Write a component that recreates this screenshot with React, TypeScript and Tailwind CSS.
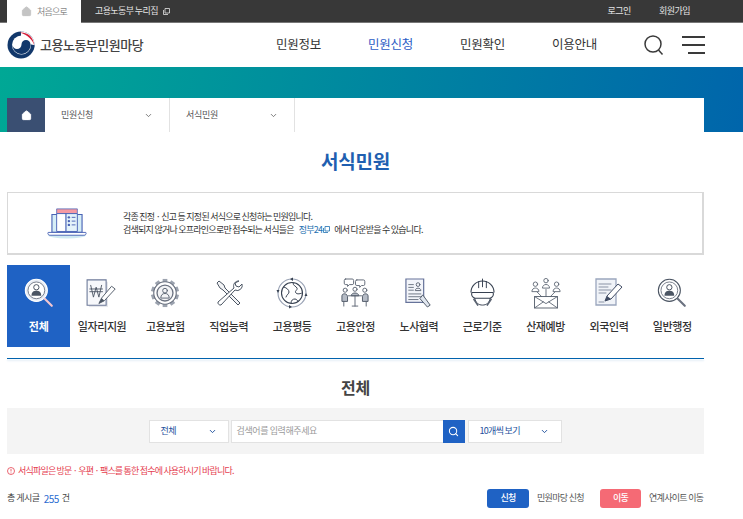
import React from "react";
import { Home, ChevronDown, Search } from "lucide-react";

const S = "#5b6472";
const common = { fill: "none", stroke: S, strokeWidth: 1, strokeLinecap: "round" as const, strokeLinejoin: "round" as const };

function Magnifier({ light }: { light?: boolean }) {
  const c = light ? "#ffffff" : "#4b5563";
  return (
    <svg width="30" height="30" viewBox="0 0 34 34">
      <circle cx="14" cy="14" r="12.500" fill={light ? "#e8edf5" : "#fff"} stroke={c} strokeWidth="1.2" />
      <circle cx="14" cy="14" r="9.500" fill="#fff" stroke="#6b7280" strokeWidth="1" />
      <circle cx="14" cy="10.500" r="3" fill="none" stroke="#374151" />
      <path d="M8.500 20c0-4 2.500-5.500 5.500-5.500s5.500 1.500 5.500 5.500z" fill="#4b5563" />
      <path d="M23.500 23.500l8 8" stroke={light ? "#f3c6d0" : "#6b7280"} strokeWidth="2.400" strokeLinecap="round" />
    </svg>
  );
}
function Won() {
  return (
    <svg width="33" height="29" viewBox="0 0 36 32">
      <path d="M3 3h21v28H3z" fill="#e5e7eb" />
      <path d="M1 1h21v28H1z" fill="#f7f8fb" stroke="#6d7a99" strokeWidth="1.200" />
      <path d="M5 7l3 13 3-11 3 11 3-13M4 11h14M4 14h14" {...common} stroke="#4b5563" />
      <path d="M14 27l3-6 11-13 4 3-12 13z" fill="#fff" stroke="#4b5563" />
      <path d="M14 27l3-6 3 3z" fill="#4b5563" />
    </svg>
  );
}
function Gear() {
  const teeth = Array.from({ length: 10 }, (_, i) => i * 36);
  return (
    <svg width="30" height="30" viewBox="0 0 32 32">
      {teeth.map((a) => (
        <rect key={a} x="13.500" y="1" width="5" height="5" fill="#9ca3af" transform={`rotate(${a} 16 16)`} />
      ))}
      <circle cx="16" cy="16" r="12" fill="#fff" stroke="#6b7280" strokeWidth="1.200" />
      <circle cx="16" cy="16" r="8.500" fill="#f3f4f6" stroke="#6b7280" strokeWidth="1.400" />
      <circle cx="16" cy="13.500" r="2.500" {...common} />
      <path d="M11.500 21c0-3 2-4.500 4.500-4.500s4.500 1.500 4.500 4.500z" {...common} />
    </svg>
  );
}
function Tools() {
  return (
    <svg width="28" height="28" viewBox="0 0 28 28">
      <path d="M2 4l2-2 5 4 1 3 15 15-2 2L8 11 5 9z" fill="#f3f4f6" stroke="#4b5563" />
      <path d="M24 2a5 5 0 0 0-5 7L3 23a2.500 2.500 0 0 0 3 3L20 11a5 5 0 0 0 7-6l-3 3-3-1-1-3z" fill="#fff" stroke="#4b5563" />
    </svg>
  );
}
function Globe() {
  return (
    <svg width="32" height="32" viewBox="0 0 32 32">
      <circle cx="16" cy="16" r="14" fill="none" stroke="#9aa3b5" strokeWidth="1.200" />
      <circle cx="16" cy="16" r="10.500" fill="#fff" stroke="#374151" strokeWidth="1.100" />
      <path d="M8 10c3 1 5 3 5 5s-2 2-3 5M17 6c0 3 3 3 4 5s-3 3-1 5 6 0 6 0M15 26c0-3 2-4 4-4s2 2 3 2" {...common} stroke="#374151" />
      <path d="M14 2l3-1.500V4zM30 16l1.500 3h-3zM16 30l-3 1.500V28zM2 16l-1.500-3h3z" fill="#374151" />
    </svg>
  );
}
function Meeting() {
  return (
    <svg width="28" height="30" viewBox="0 0 30 32">
      <path d="M5 1h7a1.500 1.500 0 0 1 1.500 1.500v3A1.500 1.500 0 0 1 12 7H9L7 9V7H5a1.500 1.500 0 0 1-1.500-1.500v-3A1.500 1.500 0 0 1 5 1zM17 2h7a1.500 1.500 0 0 1 1.500 1.500v3A1.500 1.500 0 0 1 24 8h-2l-2 2V8h-3a1.500 1.500 0 0 1-1.500-1.500v-3A1.500 1.500 0 0 1 17 2z" {...common} />
      <circle cx="4.500" cy="13" r="2.200" {...common} />
      <circle cx="25.500" cy="13" r="2.200" {...common} />
      <circle cx="15" cy="12" r="2.200" {...common} />
      <path d="M1 25v-6c0-3 6-3 6 1v5zM29 25v-6c0-3-6-3-6 1v5zM11 19c0-4 8-4 8 0z" fill="#b6bcc6" stroke="#4b5563" />
      <path d="M8 19h14M15 19v11M12 30h6M3 25v5M27 25v5" {...common} />
    </svg>
  );
}
function Doc() {
  return (
    <svg width="28" height="30" viewBox="0 0 30 32">
      <path d="M1 1h19v25H1z" fill="#f3f5fa" stroke="#66739a" strokeWidth="1.300" />
      <path d="M4 7h5M4 10h5M4 13h5M4 17h13M4 20h13M4 23h10" {...common} strokeWidth="0.900" />
      <circle cx="14" cy="7" r="2" {...common} />
      <path d="M11 13c0-3 6-3 6 0z" {...common} />
      <path d="M19 18l8 11-3 2-8-9z" fill="#dfe5ee" stroke="#4b5563" />
    </svg>
  );
}
function Helmet() {
  return (
    <svg width="27" height="31" viewBox="0 0 28 32">
      <path d="M2 15a12 12 0 0 1 24 0" fill="#fff" stroke="#374151" strokeWidth="1.100" />
      <path d="M10 3.500V10M14 1v8M18 3.500V10" {...common} stroke="#374151" />
      <path d="M3 15h22c1 3-1 5-3 6H6c-2-1-4-3-3-6z" fill="#fff" stroke="#374151" strokeWidth="1.100" />
      <path d="M6 21c1 5 4 7 8 7s7-2 8-7" {...common} stroke="#374151" />
      <path d="M5 22l4 6M23 22l-4 6" {...common} strokeWidth="1.600" />
    </svg>
  );
}
function Mail() {
  const Person = ({ x, y }: { x: number; y: number }) => (
    <g transform={`translate(${x} ${y})`}>
      <circle cx="4" cy="3" r="2.500" {...common} />
      <path d="M0 11c0-5 8-5 8 0z" {...common} />
    </g>
  );
  return (
    <svg width="30" height="32" viewBox="0 0 34 36">
      <Person x={1} y={5} />
      <Person x={13} y={1} />
      <Person x={25} y={5} />
      <path d="M7 17l6 6M17 14v8M27 17l-6 6" {...common} />
      <path d="M4 22h26v13H4z" fill="#fff" stroke="#4b5563" />
      <path d="M4 22l13 8 13-8M4 35l10-7M30 35l-10-7" {...common} />
    </svg>
  );
}
function Write() {
  return (
    <svg width="28" height="30" viewBox="0 0 28 30">
      <path d="M1 1h20v26H1z" fill="#f0f3f8" stroke="#9aa6bd" strokeWidth="1.300" />
      <path d="M4 6h12M4 9h9M4 12h12M4 15h7M4 24h5" {...common} stroke="#8a93a5" />
      <path d="M10 23l2-5L23 6l4 3-11 12z" fill="#fff" stroke="#3f4b63" />
      <path d="M10 23l2-5 4 3z" fill="#3f4b63" />
    </svg>
  );
}
function Laptop() {
  return (
    <svg width="40" height="32" viewBox="0 0 42 34">
      <ellipse cx="21" cy="30" rx="20" ry="3.500" fill="#cfe9f2" />
      <path d="M5 8h32v19H5z" fill="#d6eef6" stroke="#4a63b5" strokeWidth="1.200" />
      <path d="M10 2h22v5H10z" fill="#f59aa3" stroke="#4a63b5" strokeWidth="0.800" />
      <path d="M10 7h10v19H10z" fill="#fff" stroke="#4a63b5" />
      <path d="M20 7h12v19H20z" fill="#e4f3fa" stroke="#4a63b5" />
      <circle cx="23" cy="11" r="1.300" fill="#4a63b5" />
      <circle cx="23" cy="15" r="1.300" fill="#4a63b5" />
      <circle cx="23" cy="19" r="1.300" fill="#4a63b5" />
      <path d="M26 11h4M26 15h4M26 19h4" stroke="#4a63b5" />
      <path d="M1 27h40a2 2 0 0 1-2 3H3a2 2 0 0 1-2-3z" fill="#fff" stroke="#4a63b5" />
    </svg>
  );
}
function Logo() {
  return (
    <svg width="28" height="28" viewBox="0 0 28 28">
      <circle cx="14" cy="14" r="13.500" fill="#12386b" />
      <circle cx="14.500" cy="14" r="9.500" fill="#fff" />
      <path d="M14 .5A13.500 13.500 0 0 1 27.500 14H23A9 9 0 0 0 14 5z" fill="#fff" />
      <path d="M12.500 1.500C20 .5 27 6 27 14.500c-1-5.500-6-10.500-14.500-13z" fill="#d61f3a" />
      <path d="M5.500 13.500a4.500 4.500 0 0 0 9 0 4.500 4.500 0 0 1 9 0c.5 5-4 9.500-9 9.500s-9.500-4.500-9-9.500z" fill="#12386b" />
      <path d="M23.500 13.500c1 0 3 .5 4 1-.2 2-1 4-2 5.500-.8-2-1.500-4.500-2-6.500z" fill="#12386b" />
    </svg>
  );
}
function Ext({ className }: { className?: string }) {
  return (
    <svg width="7" height="7" viewBox="0 0 7 7" className={className} fill="none" stroke="currentColor" strokeWidth="0.800">
      <path d="M2 .5h4.500v4.500H2zM.5 2v4.500H5" />
    </svg>
  );
}

const categories: [string, React.ReactNode][] = [
  ["일자리지원", <Won />],
  ["고용보험", <Gear />],
  ["직업능력", <Tools />],
  ["고용평등", <Globe />],
  ["고용안정", <Meeting />],
  ["노사협력", <Doc />],
  ["근로기준", <Helmet />],
  ["산재예방", <Mail />],
  ["외국인력", <Write />],
  ["일반행정", <Magnifier />],
];

export default function App() {
  return (
    <div className="w-[743px] h-[519px] overflow-hidden bg-white text-[#333] font-['Noto_Sans_CJK_KR','Noto_Sans',sans-serif] tracking-[-0.5px]">
      {/* top utility bar */}
      <div className="h-[23px] bg-[#383838] border-b border-[#777] flex text-[9px] text-[#e4e4e4]">
        <div className="ml-[7px] w-[74px] h-[23px] bg-white flex items-center pl-[14px] gap-[5px] text-[#8a8a8a] tracking-[-0.8px]">
          <Home size={11} fill="#c4c4c4" stroke="#c4c4c4" />
          <span>처음으로</span>
        </div>
        <div className="ml-[14px] flex items-center gap-[5px] tracking-[-0.6px]">
          <span>고용노동부 누리집</span>
          <Ext />
        </div>
        <div className="ml-auto mr-[53px] flex items-center gap-[28px]">
          <span>로그인</span>
          <span>회원가입</span>
        </div>
      </div>

      {/* header */}
      <div className="h-[44px] bg-white flex items-center relative">
        <div className="ml-[7px] flex items-center gap-[5px]">
          <Logo />
          <span className="text-[13px] font-medium text-[#444]">고용노동부민원마당</span>
        </div>
        <nav className="absolute left-[276px] top-0 h-[42px] flex items-center text-[12.500px] tracking-[-0.250px] text-[#333]">
          <span className="w-[92px]">민원정보</span>
          <span className="w-[92px] text-[#2c5cc5]">민원신청</span>
          <span className="w-[92px]">민원확인</span>
          <span>이용안내</span>
        </nav>
        <div className="ml-auto mr-[38px] flex items-center gap-[18px]">
          <svg width="20" height="20" viewBox="0 0 20 20" fill="none" stroke="#3a3a3a" strokeWidth="1.500">
            <circle cx="9" cy="9" r="8" />
            <path d="M14.500 15l4 4.500" />
          </svg>
          <div className="w-[23px] flex flex-col items-end gap-[6.500px]">
            <div className="w-[23px] h-[1.500px] bg-[#3a3a3a]" />
            <div className="w-[23px] h-[1.500px] bg-[#3a3a3a]" />
            <div className="w-[17px] h-[1.500px] bg-[#3a3a3a]" />
          </div>
        </div>
      </div>

      {/* banner + breadcrumb */}
      <div className="h-[65px] pt-[31px] bg-[linear-gradient(100deg,#00a895_0%,#0065ab_100%)]">
        <div className="ml-[7px] w-[697px] h-[34px] bg-white flex text-[9px] text-[#555] tracking-[-0.3px]">
          <div className="w-[38px] bg-[#3a4f72] flex items-center justify-center">
            <Home size={11} fill="#fff" stroke="#fff" />
          </div>
          <div className="w-[125px] border-r border-[#e2e2e2] flex items-center justify-between pl-[16px] pr-[16px]">
            <span>민원신청</span>
            <ChevronDown size={9} />
          </div>
          <div className="w-[125px] border-r border-[#e2e2e2] flex items-center justify-between pl-[16px] pr-[16px]">
            <span>서식민원</span>
            <ChevronDown size={9} />
          </div>
        </div>
      </div>

      <h1 className="mt-[15px] h-[27px] text-center text-[19px] leading-[27px] font-bold text-[#1f5fb0] -translate-x-[16px] tracking-[-0.200px]">
        서식민원
      </h1>

      {/* info box */}
      <div className="mt-[18px] ml-[7px] w-[697px] h-[63px] border border-[#d9d9d9] border-b-[2px] border-r-[2px] flex items-center">
        <div className="ml-[39px] w-[40px] flex">
          <Laptop />
        </div>
        <div className="ml-[36px] text-[9px] leading-[13px] text-[#333] tracking-[-0.750px]">
          <p>각종 진정 · 신고 등 지정된 서식으로 신청하는 민원입니다.</p>
          <p className="flex items-center">
            검색되지 않거나 오프라인으로만 접수되는 서식들은
            <span className="ml-[5px] text-[#1d6fb0] flex items-center gap-[1px]">
              정부24
              <Ext />
            </span>
            <span className="ml-[4px]">에서 다운받을 수 있습니다.</span>
          </p>
        </div>
      </div>

      {/* categories */}
      <div className="mt-[10px] ml-[7px] w-[697px] h-[82px] grid grid-cols-11">
        <div className="bg-[#1f62c4] flex flex-col items-center text-white">
          <div className="h-[52px] pt-[4px] flex items-center justify-center">
            <Magnifier light />
          </div>
          <span className="text-[11px] font-bold mt-[1px] tracking-[-0.200px]">전체</span>
        </div>
        {categories.map(([name, icon]) => (
          <div key={name} className="flex flex-col items-center">
            <div className="h-[52px] pt-[4px] flex items-center justify-center">{icon}</div>
            <span className="text-[11px] font-medium mt-[1px] text-[#333] whitespace-nowrap tracking-[-0.400px]">{name}</span>
          </div>
        ))}
      </div>

      <div className="mt-[11px] ml-[7px] w-[697px] h-[1px] bg-[#0062ad] shadow-[0_2px_2px_#dbe8f3]" />

      <h2 className="mt-[18px] h-[21px] ml-[7px] w-[697px] text-center text-[16px] leading-[21px] font-bold text-[#444] tracking-[-0.200px]">
        전체
      </h2>

      {/* search */}
      <div className="mt-[10px] ml-[7px] w-[697px] h-[46px] bg-[#f4f4f4] flex items-center justify-center text-[9px] pr-[1px]">
        <div className="w-[80px] h-[23px] bg-white border border-[#e2e2e2] flex items-center justify-between pl-[11px] pr-[11px] text-[#1d4f9c]">
          <span>전체</span>
          <ChevronDown size={9} strokeWidth={2.500} />
        </div>
        <div className="ml-[2px] w-[234px] h-[23px] bg-white border border-[#e2e2e2] flex items-center justify-between pl-[5px] text-[#9a9a9a] tracking-[-0.400px]">
          <span>검색어를 입력해주세요</span>
          <div className="w-[22px] h-[23px] -mr-px bg-[#1f62c4] flex items-center justify-center">
            <Search size={11} stroke="#fff" strokeWidth={2.200} />
          </div>
        </div>
        <div className="ml-[3px] w-[94px] h-[23px] bg-white border border-[#e2e2e2] flex items-center justify-between pl-[11px] pr-[12px] text-[#1d4f9c] tracking-[-0.700px]">
          <span>10개씩 보기</span>
          <ChevronDown size={9} strokeWidth={2.500} />
        </div>
      </div>

      {/* notice */}
      <div className="mt-[10px] ml-[7px] h-[14px] flex items-center gap-[3px] text-[9px] text-[#e5404f] tracking-[-0.800px]">
        <svg width="8" height="8" viewBox="0 0 8 8" fill="none" stroke="#e5404f" strokeWidth="0.800">
          <circle cx="4" cy="4" r="3.500" />
          <path d="M4 2v2.500M4 5.500v.8" />
        </svg>
        <span>서식파일은 방문 · 우편 · 팩스를 통한 접수에 사용하시기 바랍니다.</span>
      </div>

      {/* list header */}
      <div className="mt-[10px] ml-[7px] w-[697px] h-[20px] flex items-center text-[9px] text-[#444]">
        <span>총 게시글</span>
        <span className="ml-[4px] text-[#2c6cd0] text-[10px]">255</span>
        <span className="ml-[3px]">건</span>
        <div className="ml-auto flex items-center tracking-[-0.700px]">
          <span className="w-[42px] h-[19px] rounded-[3px] bg-[#1f62c4] text-white font-medium flex items-center justify-center">신청</span>
          <span className="ml-[8px] w-[47px] whitespace-nowrap text-[#555]">민원마당 신청</span>
          <span className="ml-[16px] w-[41px] h-[19px] rounded-[3px] bg-[#f56a75] text-white font-medium flex items-center justify-center">이동</span>
          <span className="ml-[8px] w-[55px] whitespace-nowrap text-[#555]">연계사이트 이동</span>
        </div>
      </div>
    </div>
  );
}
